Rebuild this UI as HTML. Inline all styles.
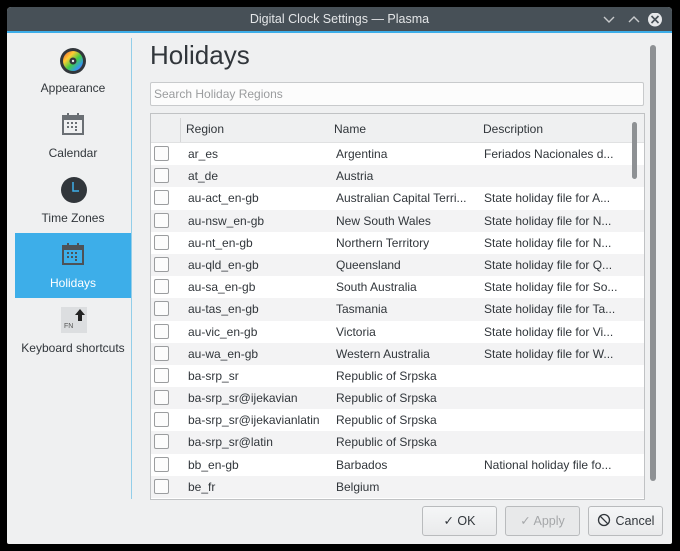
<!DOCTYPE html>
<html><head><meta charset="utf-8"><style>
*{box-sizing:border-box;margin:0;padding:0}
body{width:680px;height:551px;background:#000;font-family:"Liberation Sans","DejaVu Sans",sans-serif;font-size:12px;color:#31363b;position:relative;overflow:hidden}
.win{position:absolute;left:7px;top:7px;width:665px;height:537px;background:#eff0f1;border-radius:4px 4px 2px 2px;overflow:hidden}
.tb{position:absolute;left:0;top:0;width:665px;height:24px;background:#475057;color:#e4e6e8;font-size:12.5px;text-align:center;line-height:24px}
.tbl{position:absolute;left:0;top:24px;width:665px;height:2px;background:#3daee9}
.side{position:absolute;left:8px;top:31px;width:116px}
.item{height:65px;text-align:center;font-size:12px;position:relative}
.item .lbl{position:absolute;left:0;right:0;top:43px}
.sel{background:#3daee9;color:#fff}
.vline{position:absolute;left:124px;top:31px;width:1px;height:461px;background:#93cee9}
h1{position:absolute;left:143px;top:33px;font-size:26px;font-weight:normal;color:#31363b}
.search{position:absolute;left:143px;top:75px;width:494px;height:24px;background:#fcfcfc;border:1px solid #c8cacc;border-radius:2px;color:#9a9c9e;font-size:12px;line-height:22px;padding-left:3px}
.table{position:absolute;left:143px;top:106px;width:495px;height:387px;background:#fff;border:1px solid #c0c2c4;overflow:hidden}
.hdr{height:29px;background:#eff0f1;position:relative;border-bottom:1px solid #e0e1e2}
.hdr span{position:absolute;top:8px}
.row{height:22.2px;position:relative;white-space:nowrap}
.row span{position:absolute;top:4px}
.cb{position:absolute;left:3px;top:3px;width:15px;height:15px;border:1px solid #9b9d9f;border-radius:2px;background:#fcfcfc}
.c1{left:37px}.c2{left:185px}.c3{left:333px}
.isb{position:absolute;left:481px;top:8px;width:5px;height:57px;background:#8e9194;border-radius:3px}
.osb{position:absolute;left:643px;top:38px;width:6px;height:436px;background:#8e9194;border-radius:3px}
.btn{position:absolute;top:499px;width:75px;height:30px;border:1px solid #b9bbbd;border-radius:3px;background:linear-gradient(#f5f6f7,#e9eaeb);font-size:12.5px;text-align:center;line-height:28px}
.dis{color:#a5a7a9;background:#e8e9ea}
</style></head><body>
<div class="win">
<div class="tb">Digital Clock Settings — Plasma
<svg style="position:absolute;left:596px;top:6px" width="60" height="14"><path d="M1 4l5 5 5-5M26 9l5-5 5 5" stroke="#c8cacc" stroke-width="1.4" fill="none"/><circle cx="52" cy="6.5" r="7" fill="#e6e8ea"/><path d="M48.5 3l7 7M55.5 3l-7 7" stroke="#475057" stroke-width="1.6"/></svg>
</div>
<div class="tbl"></div>
<div class="side">
<div class="item"><svg style="position:absolute;left:44px;top:9px" width="28" height="28"><defs><linearGradient id="g" x1="0" y1="0" x2="1" y2="1"><stop offset="0" stop-color="#e53"/><stop offset=".3" stop-color="#fc3"/><stop offset=".55" stop-color="#4c4"/><stop offset=".8" stop-color="#39e"/><stop offset="1" stop-color="#c3c"/></linearGradient></defs><circle cx="14" cy="14" r="13" fill="#31363b"/><circle cx="14" cy="14" r="10" fill="url(#g)"/><circle cx="14" cy="14" r="3.5" fill="#31363b"/><circle cx="14" cy="14" r="1.2" fill="#eee"/></svg><div class="lbl">Appearance</div></div>
<div class="item"><svg style="position:absolute;left:47px;top:10px" width="22" height="22"><rect x="1" y="3" width="20" height="18" fill="none" stroke="#6a6f74" stroke-width="2"/><rect x="1" y="3" width="20" height="4" fill="#6a6f74"/><rect x="5" y="0" width="2" height="4" fill="#6a6f74"/><rect x="15" y="0" width="2" height="4" fill="#6a6f74"/><g fill="#6a6f74"><rect x="5" y="9" width="2" height="2"/><rect x="9" y="9" width="2" height="2"/><rect x="13" y="9" width="2" height="2"/><rect x="5" y="13" width="2" height="2"/><rect x="9" y="13" width="2" height="2"/><rect x="13" y="13" width="2" height="2"/><rect x="13" y="16" width="2" height="2"/></g></svg><div class="lbl">Calendar</div></div>
<div class="item"><svg style="position:absolute;left:45px;top:8px" width="28" height="28"><circle cx="14" cy="14" r="13" fill="#31363b"/><path d="M13 6v9h6" stroke="#3daee9" stroke-width="1.5" fill="none"/></svg><div class="lbl">Time Zones</div></div>
<div class="item sel"><svg style="position:absolute;left:47px;top:10px" width="22" height="22"><rect x="1" y="3" width="20" height="18" fill="none" stroke="#4d5257" stroke-width="2"/><rect x="1" y="3" width="20" height="4" fill="#4d5257"/><rect x="5" y="0" width="2" height="4" fill="#4d5257"/><rect x="15" y="0" width="2" height="4" fill="#4d5257"/><g fill="#4d5257"><rect x="5" y="9" width="2" height="2"/><rect x="9" y="9" width="2" height="2"/><rect x="13" y="9" width="2" height="2"/><rect x="5" y="13" width="2" height="2"/><rect x="9" y="13" width="2" height="2"/><rect x="13" y="13" width="2" height="2"/><rect x="13" y="16" width="2" height="2"/></g></svg><div class="lbl">Holidays</div></div>
<div class="item"><svg style="position:absolute;left:45px;top:8px" width="28" height="28"><rect x="1" y="1" width="26" height="26" fill="#dcdee0"/><text x="4" y="22" font-size="7" fill="#555" font-family="Liberation Sans">FN</text><path d="M20 3l-5 6h3v6h4V9h3z" fill="#222"/></svg><div class="lbl">Keyboard shortcuts</div></div>
</div>
<div class="vline"></div>
<h1>Holidays</h1>
<div class="search">Search Holiday Regions</div>
<div class="table">
<div class="hdr"><div style="position:absolute;left:29px;top:4px;width:1px;height:24px;background:#d5d6d7"></div><span style="left:35px">Region</span><span style="left:183px">Name</span><span style="left:332px">Description</span></div>
<div>
<div class="row" style="background:#fff"><div class="cb"></div><span class="c1">ar_es</span><span class="c2">Argentina</span><span class="c3">Feriados Nacionales d...</span></div>
<div class="row" style="background:#f3f3f4"><div class="cb"></div><span class="c1">at_de</span><span class="c2">Austria</span></div>
<div class="row" style="background:#fff"><div class="cb"></div><span class="c1">au-act_en-gb</span><span class="c2">Australian Capital Terri...</span><span class="c3">State holiday file for A...</span></div>
<div class="row" style="background:#f3f3f4"><div class="cb"></div><span class="c1">au-nsw_en-gb</span><span class="c2">New South Wales</span><span class="c3">State holiday file for N...</span></div>
<div class="row" style="background:#fff"><div class="cb"></div><span class="c1">au-nt_en-gb</span><span class="c2">Northern Territory</span><span class="c3">State holiday file for N...</span></div>
<div class="row" style="background:#f3f3f4"><div class="cb"></div><span class="c1">au-qld_en-gb</span><span class="c2">Queensland</span><span class="c3">State holiday file for Q...</span></div>
<div class="row" style="background:#fff"><div class="cb"></div><span class="c1">au-sa_en-gb</span><span class="c2">South Australia</span><span class="c3">State holiday file for So...</span></div>
<div class="row" style="background:#f3f3f4"><div class="cb"></div><span class="c1">au-tas_en-gb</span><span class="c2">Tasmania</span><span class="c3">State holiday file for Ta...</span></div>
<div class="row" style="background:#fff"><div class="cb"></div><span class="c1">au-vic_en-gb</span><span class="c2">Victoria</span><span class="c3">State holiday file for Vi...</span></div>
<div class="row" style="background:#f3f3f4"><div class="cb"></div><span class="c1">au-wa_en-gb</span><span class="c2">Western Australia</span><span class="c3">State holiday file for W...</span></div>
<div class="row" style="background:#fff"><div class="cb"></div><span class="c1">ba-srp_sr</span><span class="c2">Republic of Srpska</span></div>
<div class="row" style="background:#f3f3f4"><div class="cb"></div><span class="c1">ba-srp_sr@ijekavian</span><span class="c2">Republic of Srpska</span></div>
<div class="row" style="background:#fff"><div class="cb"></div><span class="c1">ba-srp_sr@ijekavianlatin</span><span class="c2">Republic of Srpska</span></div>
<div class="row" style="background:#f3f3f4"><div class="cb"></div><span class="c1">ba-srp_sr@latin</span><span class="c2">Republic of Srpska</span></div>
<div class="row" style="background:#fff"><div class="cb"></div><span class="c1">bb_en-gb</span><span class="c2">Barbados</span><span class="c3">National holiday file fo...</span></div>
<div class="row" style="background:#f3f3f4"><div class="cb"></div><span class="c1">be_fr</span><span class="c2">Belgium</span></div>
</div>
<div class="isb"></div>
</div>
<div class="osb"></div>
<div class="btn" style="left:415px">✓ OK</div>
<div class="btn dis" style="left:498px">✓ Apply</div>
<div class="btn" style="left:581px"><svg width="14" height="14" style="vertical-align:-2px;margin-right:5px"><circle cx="7" cy="7" r="5.5" fill="none" stroke="#31363b" stroke-width="1.3"/><path d="M3.2 3.2l7.6 7.6" stroke="#31363b" stroke-width="1.3"/></svg>Cancel</div>
</div>
</body></html>
